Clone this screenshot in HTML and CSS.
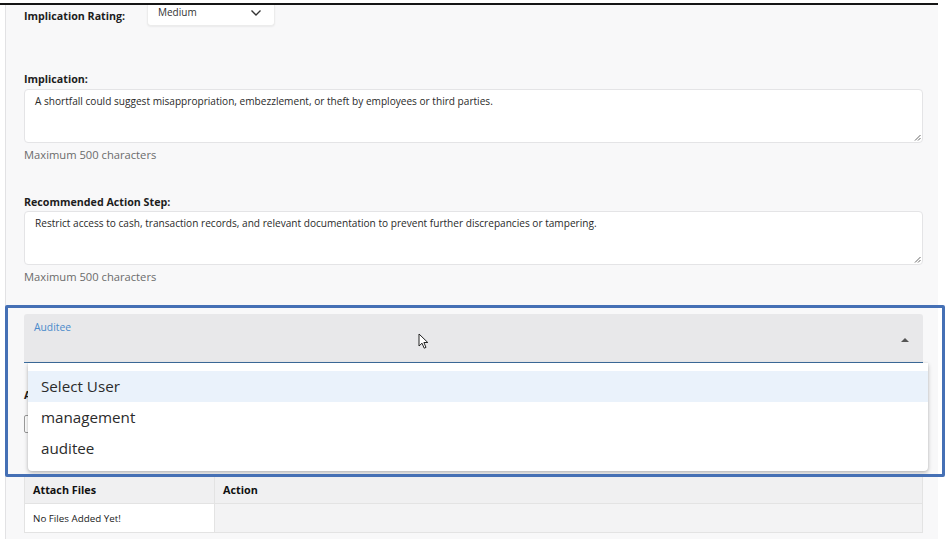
FILE: index.html
```html
<!DOCTYPE html>
<html>
<head>
<meta charset="utf-8">
<link rel="stylesheet" href="styles.css">
</head>
<body>
<div class="frame">
  <div class="panel">
    <div class="rating-row">
      <span class="label rating-label">Implication Rating:</span>
      <div class="select">
        <span>Medium</span>
        <svg class="chev" width="12" height="8" viewBox="0 0 12 8"><path d="M1.5 1.5 L6 6 L10.5 1.5" fill="none" stroke="#333" stroke-width="1.4"/></svg>
      </div>
    </div>

    <div class="group g-impl">
      <div class="label">Implication:</div>
      <div class="textarea">A shortfall could suggest misappropriation, embezzlement, or theft by employees or third parties.
        <svg class="grip" width="7" height="7" viewBox="0 0 7 7"><path d="M6.5 1 L1 6.5 M6.5 4 L4 6.5" stroke="#666" stroke-width="1"/></svg>
      </div>
      <div class="hint">Maximum 500 characters</div>
    </div>

    <div class="group g-rec">
      <div class="label">Recommended Action Step:</div>
      <div class="textarea">Restrict access to cash, transaction records, and relevant documentation to prevent further discrepancies or tampering.
        <svg class="grip" width="7" height="7" viewBox="0 0 7 7"><path d="M6.5 1 L1 6.5 M6.5 4 L4 6.5" stroke="#666" stroke-width="1"/></svg>
      </div>
      <div class="hint">Maximum 500 characters</div>
    </div>

    <div class="auditee">
      <span class="auditee-label">Auditee</span>
      <span class="tri"></span>
    </div>

    <div class="label attach-label">Attachments:</div>
    <div class="file-input"></div>

    <div class="table">
      <div class="th c1">Attach Files</div>
      <div class="th c2">Action</div>
      <div class="td c1">No Files Added Yet!</div>
      <div class="td c2 empty"></div>
    </div>
  </div>
</div>

<div class="menu">
  <div class="item active">Select User</div>
  <div class="item">management</div>
  <div class="item">auditee</div>
</div>

<div class="highlight"></div>

<svg class="cursor" width="12" height="17" viewBox="0 0 12 17"><path d="M1 1 L1 13 L4 10.2 L6.2 15.2 L8 14.4 L5.9 9.5 L9.8 9.5 Z" fill="#fff" stroke="#222" stroke-width="1" stroke-linejoin="round"/></svg>
</body>
</html>
```

FILE: styles.css
```css
html, body {
  margin: 0;
  padding: 0;
  background: #ffffff;
  font-family: "Open Sans", "Liberation Sans", sans-serif;
  color: #222;
}

.frame {
  width: 938px;
  height: 539px;
  overflow: hidden;
  border-top: 2px solid #151515;
  margin-top: 3px;
  box-sizing: border-box;
}

.panel {
  margin-left: 5px;
  height: 100%;
  background: #f8f8f9;
  border-left: 1px solid #e2e2e4;
  padding: 0 15px 0 18px;
  box-sizing: border-box;
}

.label {
  font-weight: 700;
  font-size: 10.7px;
  color: #1d1d1d;
  line-height: 14px;
}

.rating-row {
  display: flex;
  align-items: flex-start;
  height: 21px;
}
.rating-label {
  margin-top: 4px;
  width: 123px;
}
.select {
  width: 128px;
  height: 21px;
  background: #fff;
  border-radius: 0 0 4px 4px;
  box-shadow: 0 1px 2px rgba(0,0,0,0.06);
  border: 1px solid #ececec;
  border-top: none;
  box-sizing: border-box;
  display: flex;
  align-items: flex-start;
  justify-content: space-between;
  padding: 0 12px 0 10px;
  font-size: 10px;
  color: #333;
  line-height: 14px;
}
.chev { margin-top: 4px; }

.group { display: flex; flex-direction: column; }
.g-impl { margin-top: 46px; }
.g-rec { margin-top: 33px; }

.textarea {
  position: relative;
  margin-top: 3px;
  height: 54px;
  background: #fff;
  border: 1px solid #e4e4e6;
  border-radius: 4px;
  box-sizing: border-box;
  padding: 4px 10px;
  font-size: 10.1px;
  line-height: 14px;
  color: #2a2a2a;
}
.g-rec .textarea { margin-top: 2px; }
.grip { position: absolute; right: 1px; bottom: 1px; }

.hint {
  margin-top: 5px;
  font-size: 11.2px;
  color: #6b6b6b;
  line-height: 14px;
}

.auditee {
  margin-top: 30px;
  height: 49px;
  background: #e8e8ea;
  border-bottom: 1px solid #3d6e9e;
  border-radius: 3px 3px 0 0;
  box-sizing: border-box;
  display: flex;
  justify-content: space-between;
  padding: 6px 14px 0 10px;
}
.auditee-label {
  font-size: 10.3px;
  color: #4a8acb;
  line-height: 14px;
}
.tri {
  margin-top: 18px;
  width: 0;
  height: 0;
  border-left: 4px solid transparent;
  border-right: 4px solid transparent;
  border-bottom: 4px solid #555;
}

.attach-label { margin-top: 25px; }
.file-input {
  margin-top: 13px;
  height: 16px;
  width: 200px;
  border: 1px solid #9a9a9a;
  border-radius: 2px;
  background: #fff;
}

.table {
  margin-top: 42px;
  display: grid;
  grid-template-columns: 190px 1fr;
  grid-template-rows: 28px 28px;
  border: 1px solid #e3e3e3;
}
.th {
  background: #f0f0f1;
  font-weight: 700;
  font-size: 10.8px;
  color: #111;
  display: flex;
  align-items: center;
  padding-left: 8px;
  border-bottom: 1px solid #e3e3e3;
}
.td {
  background: #fff;
  font-size: 9.8px;
  color: #222;
  display: flex;
  align-items: center;
  padding-left: 8px;
}
.c1 { border-right: 1px solid #e3e3e3; }
.td.empty { background: #f3f3f4; }

.menu {
  position: absolute;
  left: 28px;
  top: 363px;
  width: 900px;
  padding: 8px 0 7px;
  background: #fff;
  border-radius: 0 0 4px 4px;
  box-shadow: 0 2px 4px rgba(0,0,0,0.25), 0 0 2px rgba(0,0,0,0.1);
  box-sizing: border-box;
}
.item {
  height: 31px;
  line-height: 31px;
  padding-left: 13px;
  font-size: 15.2px;
  color: #2b2b2b;
}
.item.active { background: #eaf2fb; }

.highlight {
  position: absolute;
  left: 5px;
  top: 305px;
  width: 940px;
  height: 172px;
  border: 3px solid #4570b5;
  border-radius: 2px;
  box-sizing: border-box;
}

.cursor {
  position: absolute;
  left: 418px;
  top: 333px;
}
```
